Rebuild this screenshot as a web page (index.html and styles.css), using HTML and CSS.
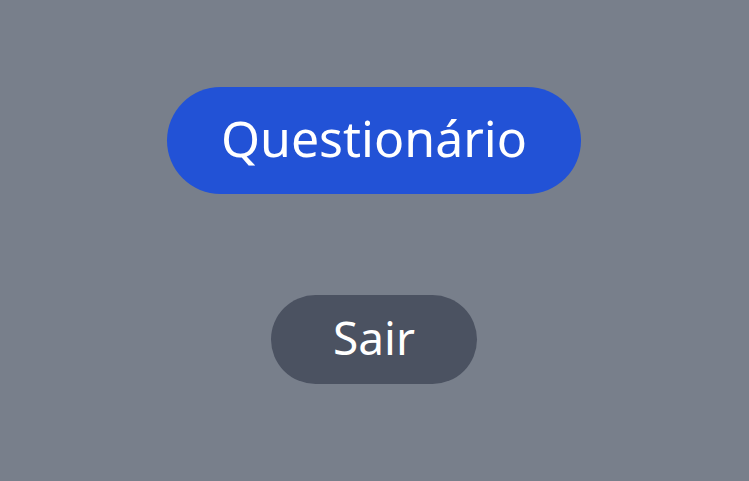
FILE: index.html
```html
<!DOCTYPE html>
<html lang="pt">
<head>
<meta charset="utf-8">
<link rel="stylesheet" href="styles.css">
</head>
<body>
<main class="menu">
  <button class="btn btn-primary">Questionário</button>
  <button class="btn btn-secondary">Sair</button>
</main>
</body>
</html>
```
FILE: styles.css
```css
html, body {
  margin: 0;
  height: 100%;
}
body {
  background: #787f8b;
  font-family: "Noto Sans", "Open Sans", sans-serif;
}
.menu {
  display: flex;
  flex-direction: column;
  align-items: center;
  padding-top: 87px;
  padding-right: 1px;
  gap: 101px;
}
.btn {
  border: none;
  color: #ffffff;
  font-family: inherit;
  font-weight: 400;
  border-radius: 999px;
  display: flex;
  align-items: center;
  justify-content: center;
  padding: 0 0 6px 0;
  margin: 0;
  box-sizing: border-box;
}
.btn-primary {
  background: #2252d6;
  width: 414px;
  height: 107px;
  font-size: 50px;
}
.btn-secondary {
  background: #4b5261;
  width: 206px;
  height: 89px;
  font-size: 46px;
}
```
